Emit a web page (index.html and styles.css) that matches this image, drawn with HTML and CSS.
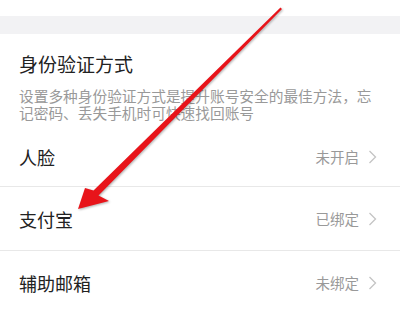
FILE: index.html
```html
<!DOCTYPE html>
<html lang="zh-CN">
<head>
    <meta charset="UTF-8">
    <meta name="viewport" content="width=device-width, initial-scale=1.0">
    <title>身份验证方式</title>
    <link rel="stylesheet" href="styles.css">
</head>
<body>
    <div class="page">
        <div class="topSpace"></div>
        <div class="greyBand"></div>

        <div class="section">
            <div class="sectionTitle">身份验证方式</div>
            <div class="sectionDesc">设置多种身份验证方式是提升账号安全的最佳方法，忘记密码、丢失手机时可快速找回账号</div>
        </div>

        <div class="list">
            <div class="row first">
                <span class="rowLabel">人脸</span>
                <span class="rowValue">未开启</span>
                <svg class="chevron" viewBox="0 0 9 14"><polyline points="1.5,1 7.5,7 1.5,13" /></svg>
            </div>
            <div class="row">
                <span class="rowLabel">支付宝</span>
                <span class="rowValue">已绑定</span>
                <svg class="chevron" viewBox="0 0 9 14"><polyline points="1.5,1 7.5,7 1.5,13" /></svg>
            </div>
            <div class="row">
                <span class="rowLabel">辅助邮箱</span>
                <span class="rowValue">未绑定</span>
                <svg class="chevron" viewBox="0 0 9 14"><polyline points="1.5,1 7.5,7 1.5,13" /></svg>
            </div>
        </div>

        <!-- red pointer drawn over the screenshot -->
        <svg class="arrow" viewBox="0 0 400 310">
            <polygon points="78,209 85,188 93.5,190.5 280.5,7.5 282,9 98.5,195.5 109,201" />
        </svg>
    </div>
</body>
</html>
```

FILE: styles.css
```css
body {
    margin: 0;
    background-color: #fff;
    font-family: 'Noto Sans CJK SC', 'Noto Sans', sans-serif;
    color: #222;
}

.page {
    position: relative;
    width: 400px;
    height: 310px;
    overflow: hidden;
}

.topSpace {
    height: 16px;
}

.greyBand {
    height: 18px;
    background-color: #f2f2f4;
}

.section {
    padding: 0 23px 0 19px;
}

.sectionTitle {
    margin-top: 17px;
    font-size: 19px;
    line-height: 26px;
    color: #222;
}

.sectionDesc {
    margin-top: 10px;
    font-size: 14.7px;
    line-height: 17px;
    color: #999;
}

.row {
    display: flex;
    align-items: center;
    height: 64px;
    padding: 0 23px 0 19px;
    border-top: 1px solid #e8e8e8;
    box-sizing: border-box;
}

.row.first {
    height: 65px;
    padding-top: 6px;
    border-top: none;
}

.rowLabel {
    flex: 1;
    font-size: 18px;
    color: #222;
}

.rowValue {
    font-size: 14.5px;
    color: #999;
}

.chevron {
    width: 9px;
    height: 14px;
    margin-left: 9px;
}

.chevron polyline {
    fill: none;
    stroke: #c4c4c4;
    stroke-width: 1.3;
}

.arrow {
    position: absolute;
    left: 0;
    top: 0;
    width: 400px;
    height: 310px;
    filter: drop-shadow(1px 1px 1px rgba(0, 0, 0, 0.3));
}

.arrow polygon {
    fill: #e8141a;
}
```
